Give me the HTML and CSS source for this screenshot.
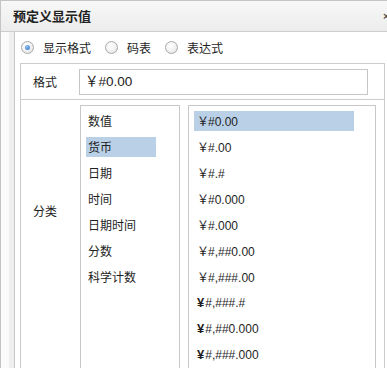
FILE: index.html
```html
<!DOCTYPE html>
<html>
<head>
<meta charset="utf-8">
<link rel="stylesheet" href="styles.css">
</head>
<body>
<div class="dialog">
  <div class="titlebar">
    <span class="title">预定义显示值</span>
    <span class="close">×</span>
  </div>
  <div class="main">
    <div class="gutter"><div class="gutter-white"></div><div class="gutter-gray"></div></div>
    <div class="panel">
      <div class="radios">
        <label class="radio"><span class="circle checked"></span><span class="rtext">显示格式</span></label>
        <label class="radio"><span class="circle"></span><span class="rtext">码表</span></label>
        <label class="radio"><span class="circle"></span><span class="rtext">表达式</span></label>
      </div>
      <div class="table">
        <div class="row row-format">
          <div class="label">格式</div>
          <div class="input">￥#0.00</div>
        </div>
        <div class="row row-cat">
          <div class="label label-cat">分类</div>
          <div class="list list-cat">
            <div class="item">数值</div>
            <div class="item selected">货币</div>
            <div class="item">日期</div>
            <div class="item">时间</div>
            <div class="item">日期时间</div>
            <div class="item">分数</div>
            <div class="item">科学计数</div>
          </div>
          <div class="list list-fmt">
            <div class="item selected"><span class="yen">￥</span>#0.00</div>
            <div class="item"><span class="yen">￥</span>#.00</div>
            <div class="item"><span class="yen">￥</span>#.#</div>
            <div class="item"><span class="yen">￥</span>#0.000</div>
            <div class="item"><span class="yen">￥</span>#.000</div>
            <div class="item"><span class="yen">￥</span>#,##0.00</div>
            <div class="item"><span class="yen">￥</span>#,###.00</div>
            <div class="item"><span class="yen bold">¥</span>#,###.#</div>
            <div class="item"><span class="yen bold">¥</span>#,##0.000</div>
            <div class="item"><span class="yen bold">¥</span>#,###.000</div>
          </div>
        </div>
      </div>
    </div>
  </div>
</div>
</body>
</html>
```

FILE: styles.css
```css
html, body {
  margin: 0;
  padding: 0;
  overflow: hidden;
  background: #ffffff;
}

body {
  font-family: "Noto Sans CJK SC", "Liberation Sans", sans-serif;
  font-size: 12px;
  color: #1e1e1e;
}

.dialog {
  width: 387px;
  height: 368px;
  border-top: 1px solid #c4c4c4;
  border-left: 1px solid #c4c4c4;
  box-sizing: border-box;
  display: flex;
  flex-direction: column;
  overflow: hidden;
}

.titlebar {
  height: 30px;
  flex: none;
  border-bottom: 1px solid #cdcdcd;
  background: linear-gradient(#f8f8f8, #ececec);
  display: flex;
  align-items: center;
  justify-content: space-between;
  padding-left: 12px;
}

.title {
  font-weight: bold;
  font-size: 13px;
  color: #222;
  line-height: 18px;
}

.close {
  font-family: "Liberation Sans", sans-serif;
  font-size: 11px;
  font-weight: bold;
  color: #555;
  width: 4px;
  overflow: hidden;
  line-height: 16px;
}

.main {
  flex: 1;
  display: flex;
}

.gutter {
  display: flex;
  flex: none;
}

.gutter-white {
  width: 8px;
  background: #fbfbfb;
}

.gutter-gray {
  width: 5px;
  background: #efefef;
}

.panel {
  flex: 1;
  border-left: 1px solid #c8c8c8;
  padding-left: 5px;
  background: #fff;
}

.radios {
  height: 31px;
  display: flex;
  align-items: center;
  padding-left: 1px;
}

.radio {
  display: flex;
  align-items: center;
  margin-right: 14px;
}

.circle {
  width: 11px;
  height: 11px;
  border-radius: 50%;
  border: 1px solid #a9a9a9;
  background: radial-gradient(circle at 40% 35%, #ffffff 0%, #f2f2f2 50%, #d9d9d9 100%);
  display: flex;
  align-items: center;
  justify-content: center;
  margin-right: 9px;
}

.circle.checked::after {
  content: "";
  width: 5px;
  height: 5px;
  border-radius: 50%;
  background: radial-gradient(circle at 40% 35%, #8ec0f0, #2f74c8);
}

.rtext {
  line-height: 17px;
}

.table {
  width: 365px;
  border: 1px solid #cccccc;
  box-sizing: border-box;
}

.row {
  display: flex;
}

.row-format {
  height: 36px;
  border-bottom: 1px solid #cccccc;
  box-sizing: border-box;
  padding-top: 5px;
}

.label {
  width: 58px;
  padding-left: 12px;
  box-sizing: border-box;
  flex: none;
  line-height: 17px;
  padding-top: 4px;
}

.input {
  width: 289px;
  height: 26px;
  border: 1px solid #c6c6c6;
  box-sizing: border-box;
  font-family: "Liberation Sans", "Noto Sans CJK SC", sans-serif;
  font-size: 13.5px;
  line-height: 24px;
  padding-left: 5px;
  color: #1a1a1a;
}

.row-cat {
  padding-top: 5px;
}

.label-cat {
  width: 59px;
  padding-top: 97px;
}

.list {
  height: 300px;
  border: 1px solid #c8c8c8;
  box-sizing: border-box;
  padding: 5px;
  flex: none;
}

.list-cat {
  width: 100px;
  margin-right: 8px;
}

.list-fmt {
  width: 188px;
}

.item {
  height: 20px;
  line-height: 20px;
  margin-bottom: 6px;
  white-space: nowrap;
}

.list-cat .item {
  width: 70px;
  padding-left: 2px;
  box-sizing: border-box;
}

.list-fmt .item {
  width: 160px;
  padding-left: 3px;
  box-sizing: border-box;
  font-family: "Liberation Sans", "Noto Sans CJK SC", sans-serif;
  font-size: 12px;
}

.yen {
  font-family: "Noto Sans CJK SC", sans-serif;
  font-size: 12px;
  margin-right: -1px;
}

.yen.bold {
  font-family: "Liberation Sans", sans-serif;
  font-weight: bold;
  font-size: 13px;
  margin-right: 1px;
}

.item.selected {
  background: #b9d0e7;
}
```
